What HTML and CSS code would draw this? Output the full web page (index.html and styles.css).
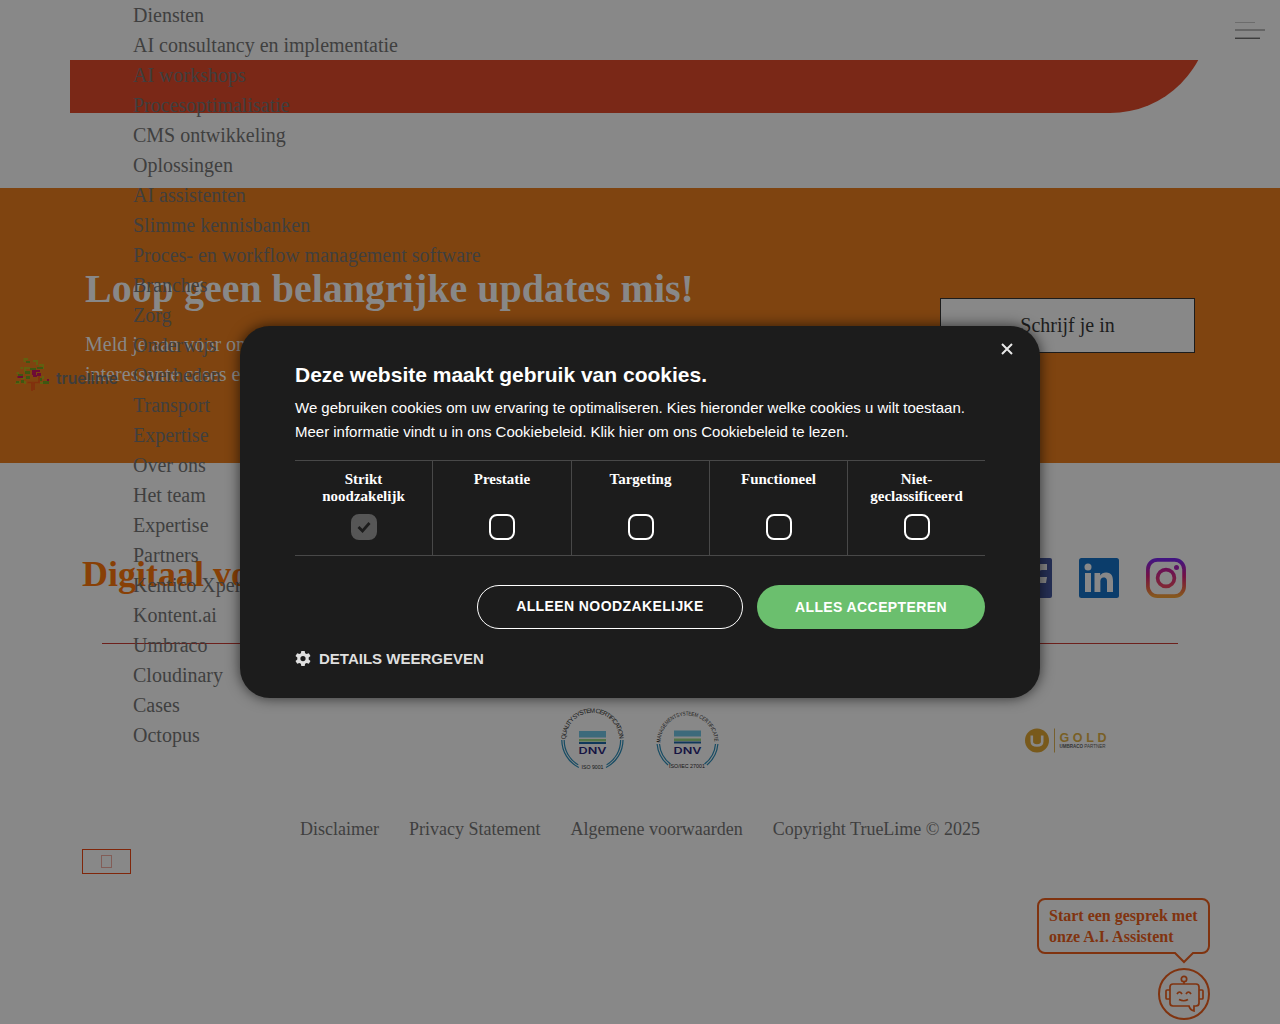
FILE: index.html
```html
<!DOCTYPE html>
<html lang="nl">
<head>
<meta charset="utf-8">
<title>TrueLime</title>
<link rel="stylesheet" href="styles.css">
</head>
<body>
<header class="topbar">
  <svg class="burger" width="30" height="18" viewBox="0 0 30 18"><path d="M0 .5H20" stroke="#6c6c6c"/><path d="M0 8H30" stroke="#646464" stroke-width="2"/><path d="M0 15.5H25" stroke="#666"/><path d="M0 16.5H25" stroke="#3c3c3c"/></svg>
</header>
<div class="hero"><div class="hero-block"></div></div>
<section class="updates">
  <div class="updates-copy">
    <h2>Loop geen belangrijke updates mis!</h2>
    <p>Meld je aan voor onze nieuwsbrief<br>interessante cases en artikelen</p>
  </div>
  <a class="subscribe">Schrijf je in</a>
</section>
<footer class="footer">
  <div class="footer-top">
    <h3>Digitaal voorop</h3>
    <div class="social">
      <svg width="40" height="40" viewBox="0 0 40 40"><rect width="40" height="40" rx="2" fill="#252f55"/><path d="M27 40V25h7l1-6h-8v-4c0-2 1-3 3-3h5V6h-6c-5 0-8 3-8 8v5h-6v6h6v15z" fill="#888"/></svg>
      <svg width="40" height="40" viewBox="0 0 40 40"><rect width="40" height="40" rx="2.5" fill="#0b3d6b"/><circle cx="9" cy="9" r="3.5" fill="#888"/><path d="M6 15h6v19H6zM15.500 15h5.700v2.600c1.100-1.900 3.100-3.100 5.900-3.100 5.500 0 6.900 3.700 6.900 8.500v11h-6v-9.800c0-2.400-.2-4.800-3.200-4.800-2.900 0-3.400 2.200-3.400 4.700V34h-5.900z" fill="#888"/></svg>
      <svg width="40" height="40" viewBox="0 0 40 40"><defs><linearGradient id="insta" x2="0" y2="1"><stop offset="0" stop-color="#421480"/><stop offset=".45" stop-color="#741044"/><stop offset=".75" stop-color="#803329"/><stop offset="1" stop-color="#85571e"/></linearGradient><linearGradient id="lens" x2="0" y2="1"><stop offset="0" stop-color="#6a1054"/><stop offset="1" stop-color="#802635"/></linearGradient></defs><g fill="none" stroke-width="3.700"><rect x="1.900" y="1.900" width="36.200" height="36.200" rx="9.500" stroke="url(#insta)"/><circle cx="20" cy="20" r="8.400" stroke="url(#lens)"/></g><circle cx="30.500" cy="9.500" r="2.500" fill="#5c1265"/></svg>
    </div>
  </div>
  <div class="rule"></div>
  <div class="partners">
    <svg class="cert" width="64" height="64" viewBox="0 0 64 64"><defs><path id="arcA" d="M5.700 31.500A26.800 26.800 0 0 1 59.300 31.500"/></defs><text font-size="6.300" fill="#151515"><textPath href="#arcA" textLength="83">QUALITY SYSTEM CERTIFICATION</textPath></text><path fill="none" stroke="#174c64" stroke-width="1.200" d="M1.800 32a31 31 0 0 0 17 27.500M4.200 32a28 28 0 0 0 14 24.800M63 32a31 31 0 0 1-17 27.500M60.600 32a28 28 0 0 1-14 24.800"/><path fill="#3d6a7b" d="M19 23h27v6.500h-27z"/><path fill="#557448" d="M19 31h27v2.500h-27z"/><path fill="#10385a" d="M19 34h27v2h-27z"/><text class="dnv" x="18.500" y="45.500" font-size="9.500" textLength="28" lengthAdjust="spacingAndGlyphs">DNV</text><text x="21.500" y="61" font-size="5.300" fill="#151515" textLength="22" lengthAdjust="spacingAndGlyphs">ISO 9001</text></svg>
    <svg class="cert" width="64" height="64" viewBox="0 0 64 64"><defs><path id="arcB" d="M5.500 34.500A27 27 0 0 1 59.500 34.500"/></defs><text font-size="5.600" fill="#151515"><textPath href="#arcB" textLength="83.500" lengthAdjust="spacingAndGlyphs">MANAGEMENTSYSTEEM CERTIFICATIE</textPath></text><path fill="none" stroke="#174c64" stroke-width="1.200" d="M2.100 36a31 31 0 0 0 11 21M4.500 36a28 28 0 0 0 11 20M62.900 36a31 31 0 0 1-11 21M60.500 36a28 28 0 0 1-11 20"/><path fill="#3d6a7b" d="M19 22.500h27v6h-27z"/><path fill="#557448" d="M19 30.500h27v2.500h-27z"/><path fill="#10385a" d="M19 33.500h27v2h-27z"/><text class="dnv" x="18.500" y="45.500" font-size="9.500" textLength="28" lengthAdjust="spacingAndGlyphs">DNV</text><text x="14" y="60" font-size="5.300" fill="#151515" textLength="36" lengthAdjust="spacingAndGlyphs">ISO/IEC 27001</text></svg>
    <svg class="gold" width="84" height="28" viewBox="0 0 84 28"><circle cx="13" cy="13.500" r="12" fill="#78591b"/><path d="M7.800 8.500v6q0 4 5.200 4t5.200-4v-6" fill="none" stroke="#888" stroke-width="2.600"/><path d="M30.500 1.500v24" stroke="#77602d"/><text x="35.500" y="14.500" font-size="12.500" font-weight="bold" fill="#795f25" textLength="47">GOLD</text><text x="35.500" y="20.500" font-size="4.600" fill="#333" textLength="46" lengthAdjust="spacingAndGlyphs"><tspan font-weight="bold">UMBRACO</tspan> PARTNER</text></svg>
  </div>
  <div class="legal"><a>Disclaimer</a><a>Privacy Statement</a><a>Algemene voorwaarden</a><a>Copyright TrueLime © 2025</a></div>
  <div class="to-top"><span></span></div>
</footer>

<ul class="menu">
  <li>Diensten</li><li>AI consultancy en implementatie</li><li>AI workshops</li><li>Procesoptimalisatie</li><li>CMS ontwikkeling</li><li>Oplossingen</li><li>AI assistenten</li><li>Slimme kennisbanken</li><li>Proces- en workflow management software</li><li>Branches</li><li>Zorg</li><li>Onderwijs</li><li>Overheden</li><li>Transport</li><li>Expertise</li><li>Over ons</li><li>Het team</li><li>Expertise</li><li>Partners</li><li>Kentico Xperience</li><li>Kontent.ai</li><li>Umbraco</li><li>Cloudinary</li><li>Cases</li><li>Octopus</li>
</ul>

<svg class="brand" width="106" height="36" viewBox="0 0 106 36">
  <path fill="#626010" d="M9.500 1H14v2h-2.500v2h-2zM19 3h5v5h-2V5h-3zM25 7h5v5h-2V9h-3zM6.500 10h2.500v2H6.500zM10 10h6v2h-4v3h-2zM2.500 15H5v2H2.500zM7 20h4v2H7zM28 19h2v3h-2zM1 26h3v-2h2v3H1zM10 24h2v3h-2zM26 25h3v2h-3z"/>
  <path fill="#3f5712" d="M12 4h4v2h-4zM16 11h6v2h-6zM23 10h6v2h-6zM4 17h5v2H4zM11 14h5v3h-5zM12 19h4v3h-4zM2 24h3v2H2zM7 23h3v3H7zM29 24h6v3h-6zM26 21h2v3h-2z"/>
  <path fill="#6e0b36" d="M3.500 19H9v2H3.500zM18 13h8v2h-4v3h-4zM23 16h4v3h-4zM19 18h4v2h-4zM33 22h2v2h-2z"/>
  <path d="M13.500 25.500H18V34M25 19v6.500h-5V33" fill="none" stroke="#82300d" stroke-width="1.700"/>
  <text x="42" y="26.500" textLength="62" lengthAdjust="spacingAndGlyphs">truelime</text>
</svg>

<div class="chat">
  <div class="bubble">Start een gesprek met<br>onze A.I. Assistent
    <svg class="tail" width="22" height="13" viewBox="0 0 22 13"><path d="M2 0h18v2H2z" fill="#888"/><path d="M0 1h2l9 9 9-9h2" fill="none" stroke="#80330f" stroke-width="2"/></svg>
  </div>
  <svg class="bot" width="52" height="52" viewBox="0 0 52 52" fill="none" stroke="#80330f" stroke-width="1.700"><circle cx="26" cy="26" r="25" stroke-width="2"/><circle cx="26" cy="11" r="2.700"/><path d="M26 14v2M12 19q0-3 3-3h23q3 0 3 3v16q0 3-3 3h-2v5q-4-1-5-5H15q-3 0-3-3zM12 22H9q-1 0-1 1v7q0 1 1 1h3M41 22h3q1 0 1 1v7q0 1-1 1h-3M19 26q2.500-4 5 0M28 26q2.500-4 5 0M21 31.500q5 2.500 9 0"/></svg>
</div>

<div class="dialog" role="dialog">
  <svg class="close" width="12" height="12" viewBox="0 0 12 12"><path d="M1 1l10 10M11 1L1 11" stroke="#e8e8e8" stroke-width="2"/></svg>
  <h1>Deze website maakt gebruik van cookies.</h1>
  <p>We gebruiken cookies om uw ervaring te optimaliseren. Kies hieronder welke cookies u wilt toestaan. Meer informatie vindt u in ons Cookiebeleid. Klik hier om ons Cookiebeleid te lezen.</p>
  <div class="options">
    <div class="option"><b>Strikt noodzakelijk</b><span class="box checked"><svg width="14" height="12" viewBox="0 0 14 12"><path d="M1.500 6l4 4 7-8" fill="none" stroke="#1c1c1c" stroke-width="2.700"/></svg></span></div>
    <div class="option"><b>Prestatie</b><span class="box"></span></div>
    <div class="option"><b>Targeting</b><span class="box"></span></div>
    <div class="option"><b>Functioneel</b><span class="box"></span></div>
    <div class="option"><b>Niet-<br>geclassificeerd</b><span class="box"></span></div>
  </div>
  <div class="actions"><a class="btn only">ALLEEN NOODZAKELIJKE</a><a class="btn all">ALLES ACCEPTEREN</a></div>
  <div class="details"><svg width="16" height="16" viewBox="0 0 16 16"><path fill="#dfdfdf" fill-rule="evenodd" d="M6.300 0h3.400l.4 2.300 1.500.8 2.200-.9 1.700 2.900-1.800 1.500v1.800l1.800 1.500-1.700 2.900-2.200-.9-1.500.8-.4 2.300H6.300l-.4-2.300-1.500-.8-2.200.9L.5 9.900l1.800-1.500V6.600L.5 5.100l1.700-2.900 2.200.9 1.500-.8zM8 5a2.600 2.600 0 1 0 0 5.200A2.600 2.600 0 0 0 8 5z"/></svg><span>DETAILS WEERGEVEN</span></div>
</div>
</body>
</html>
```
FILE: styles.css
```css
* { box-sizing: border-box; }
html, body { height: 100%; }
body { margin: 0; background: #888; overflow: hidden; position: relative; font: 20px/30px "Liberation Serif", serif; color: #3f3f3f; }
h1, h2, h3, p, ul { margin: 0; padding: 0; }
.topbar { height: 60px; display: flex; justify-content: flex-end; padding: 22px 15px 0 0; }
.hero { height: 53px; margin: 0 70px; overflow: hidden; display: flex; align-items: flex-end; }
.hero-block { flex: 1; height: 130px; background: #7a2817; border-radius: 0 0 100px 0; }
.updates { margin-top: 75px; height: 275px; padding: 0 85px; background: #7f4410; display: flex; justify-content: space-between; align-items: center; color: #888; }
.updates h2 { font-size: 40px; line-height: 50px; margin-bottom: 15px; white-space: nowrap; }
.updates-copy { padding-top: 1px; }
.subscribe { width: 255px; height: 55px; background: #888; border: 1px solid #1c1c1c; color: #1c1c1c; text-align: center; line-height: 53px; }
.footer-top { display: flex; justify-content: space-between; align-items: center; height: 40px; margin: 95px 94px 0 82px; }
.footer h3 { font-size: 36px; line-height: 40px; color: #884006; padding-bottom: 8px; }
.social { display: flex; gap: 27px; }
.rule { margin: 45px 102px 0; height: 1px; background: #6d201c; }
.partners { margin: 63px 172px 0 560px; display: flex; align-items: center; height: 66px; font-family: "Liberation Sans", sans-serif; }
.partners text { font-family: "Liberation Sans", sans-serif; }
.cert { margin-right: 31px; overflow: visible; }
.gold { margin-left: auto; margin-top: 2px; }
.partners .dnv { fill: #161443; font-family: Inter, sans-serif; font-weight: 600; }
.legal { margin-top: 41px; display: flex; justify-content: center; gap: 30px; font-size: 18px; line-height: 31px; }
.to-top { margin: 4px 0 0 82px; width: 49px; height: 25px; border: 1px solid #80260a; display: flex; align-items: center; justify-content: center; }
.to-top span { width: 11px; height: 13px; border: 1px solid #825d57; }
.menu { position: absolute; left: 133px; top: 0; list-style: none; white-space: nowrap; }
.brand { position: absolute; left: 14px; top: 357px; }
.brand text { font: 600 15px Inter, sans-serif; fill: #3d3d3d; }
.chat { position: absolute; right: 70px; top: 898px; width: 174px; display: flex; flex-direction: column; align-items: flex-end; color: #80330f; }
.bubble { position: relative; width: 173px; height: 56px; border: 2px solid #80330f; border-radius: 8px; padding: 5px 0 0 10px; font-size: 16px; font-weight: bold; line-height: 21px; white-space: nowrap; }
.tail { position: absolute; right: 13px; bottom: -13px; }
.bot { margin-top: 14px; }
.dialog { position: absolute; left: 240px; top: 326px; width: 800px; height: 372px; padding: 35px 55px 0; border-radius: 30px; background: #1c1c1c; color: #fff; box-shadow: 0 0 14px rgba(0,0,0,.65); font-family: "Liberation Sans", sans-serif; }
.close { position: absolute; right: 27px; top: 17px; }
.dialog h1 { font-size: 21px; line-height: 28px; }
.dialog p { margin-top: 7px; font-size: 15px; line-height: 24px; letter-spacing: -.01px; }
.options { margin-top: 16px; height: 96px; display: grid; grid-template-columns: 138px 139px 138px 138px 137px; border: solid #484848; border-width: 1px 0; }
.option { display: flex; flex-direction: column; align-items: center; justify-content: space-between; padding: 10px 15px 15px; text-align: center; font: 15px/17px "Liberation Serif", serif; border-right: 1px solid #484848; }
.option:last-child { border-right: 0; }
.box { width: 26px; height: 26px; border: 2px solid #fff; border-radius: 8px; display: flex; align-items: center; justify-content: center; }
.checked { background: #565656; border-color: #565656; }
.actions { margin-top: 29px; display: flex; justify-content: flex-end; gap: 14px; }
.btn { height: 44px; border-radius: 22px; text-align: center; font-weight: bold; font-size: 14px; line-height: 44px; letter-spacing: .4px; white-space: nowrap; }
.only { width: 266px; border: 1px solid #fff; line-height: 41px; }
.all { width: 228px; background: #6bbf6e; }
.details { margin-top: 21px; display: flex; align-items: center; gap: 8px; height: 18px; font-weight: bold; font-size: 15px; line-height: 18px; color: #dfdfdf; }
```
